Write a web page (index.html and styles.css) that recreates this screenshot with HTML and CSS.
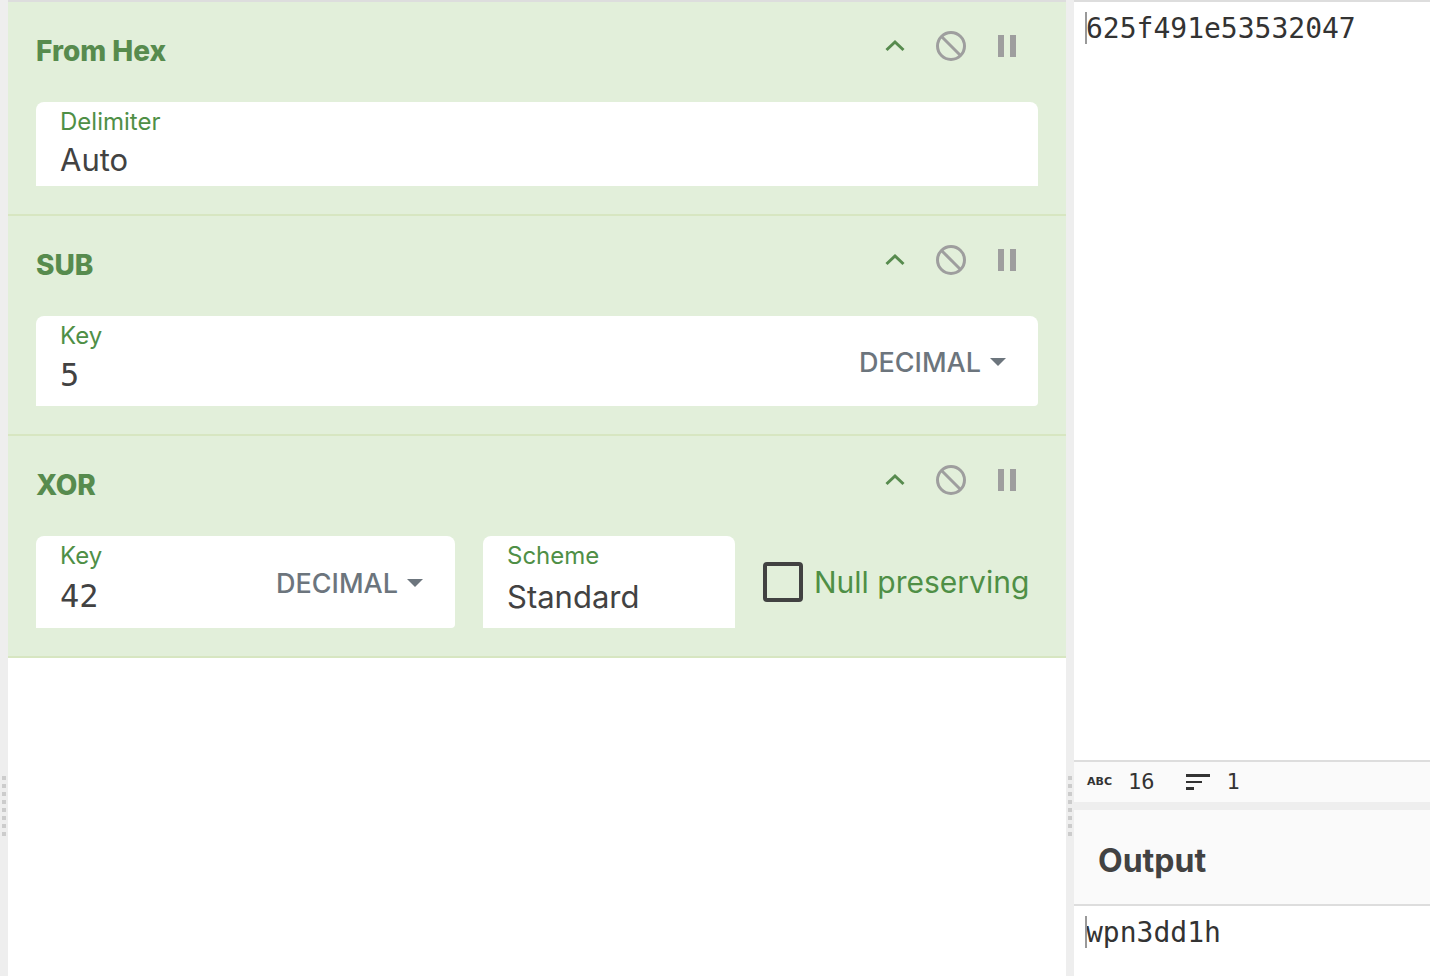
FILE: index.html
```html
<!DOCTYPE html>
<html lang="en">
<head>
<meta charset="utf-8">
<title>Recipe</title>
<link rel="stylesheet" href="styles.css">
</head>
<body>
<svg class="sprite" aria-hidden="true">
  <symbol id="chevron" viewBox="0 0 32 32"><path d="M7.500 20 16 12l8.500 8" fill="none" stroke="#578b4e" stroke-width="3"/></symbol>
  <symbol id="disable" viewBox="0 0 32 32"><g fill="none" stroke="#9e9e9e" stroke-width="3"><circle cx="16" cy="16" r="13.500"/><path d="M6.500 6.500l19 19"/></g></symbol>
  <symbol id="pause" viewBox="0 0 32 32"><path d="M7 5h6v22H7zM19 5h6v22h-6z" fill="#9e9e9e"/></symbol>
</svg>
<div class="workspace">
  <div class="gutter"><span class="grip"></span></div>
  <main class="recipe">
    <section class="operation">
      <header class="op-header">
        <h2 class="op-title">From Hex</h2>
        <div class="op-actions">
          <button class="icon-button" aria-label="Collapse"><svg class="icon"><use href="#chevron"/></svg></button>
          <button class="icon-button" aria-label="Disable"><svg class="icon"><use href="#disable"/></svg></button>
          <button class="icon-button" aria-label="Set breakpoint"><svg class="icon"><use href="#pause"/></svg></button>
        </div>
      </header>
      <div class="field compact">
        <label class="field-label" for="delimiter">Delimiter</label>
        <select class="field-value" id="delimiter"><option>Auto</option></select>
      </div>
    </section>
    <section class="operation">
      <header class="op-header">
        <h2 class="op-title">SUB</h2>
        <div class="op-actions">
          <button class="icon-button" aria-label="Collapse"><svg class="icon"><use href="#chevron"/></svg></button>
          <button class="icon-button" aria-label="Disable"><svg class="icon"><use href="#disable"/></svg></button>
          <button class="icon-button" aria-label="Set breakpoint"><svg class="icon"><use href="#pause"/></svg></button>
        </div>
      </header>
      <div class="field with-toggle medium">
        <div class="field-main">
          <label class="field-label" for="sub-key">Key</label>
          <input class="field-value mono" id="sub-key" type="text" value="5">
        </div>
        <button class="toggle" aria-haspopup="true">DECIMAL<span class="caret"></span></button>
      </div>
    </section>
    <section class="operation">
      <header class="op-header">
        <h2 class="op-title">XOR</h2>
        <div class="op-actions">
          <button class="icon-button" aria-label="Collapse"><svg class="icon"><use href="#chevron"/></svg></button>
          <button class="icon-button" aria-label="Disable"><svg class="icon"><use href="#disable"/></svg></button>
          <button class="icon-button" aria-label="Set breakpoint"><svg class="icon"><use href="#pause"/></svg></button>
        </div>
      </header>
      <div class="field-row">
        <div class="field with-toggle">
          <div class="field-main">
            <label class="field-label" for="xor-key">Key</label>
            <input class="field-value mono" id="xor-key" type="text" value="42">
          </div>
          <button class="toggle" aria-haspopup="true">DECIMAL<span class="caret"></span></button>
        </div>
        <div class="field">
          <label class="field-label" for="scheme">Scheme</label>
          <select class="field-value" id="scheme"><option>Standard</option></select>
        </div>
        <label class="check"><input class="check-box" type="checkbox">Null preserving</label>
      </div>
    </section>
  </main>
  <div class="gutter"><span class="grip"></span></div>
  <div class="io">
    <section class="pane">
      <div class="editor">
        <textarea class="text" aria-label="Input" spellcheck="false">625f491e53532047</textarea>
        <span class="cursor"></span>
      </div>
      <footer class="status">
        <span class="status-item"><span class="abc">ABC</span>16</span>
        <span class="status-item"><svg class="lines" viewBox="0 0 24 16" aria-label="Lines"><path d="M0 0h24v3H0zM0 7h16v2H0zM0 13h8v3H0z" fill="#333"/></svg>1</span>
      </footer>
    </section>
    <div class="divider"></div>
    <section class="pane">
      <header class="output-header"><h2 class="output-title">Output</h2></header>
      <div class="editor">
        <textarea class="text" aria-label="Output" spellcheck="false" readonly>wpn3dd1h</textarea>
        <span class="cursor"></span>
      </div>
    </section>
  </div>
</div>
</body>
</html>
```
FILE: styles.css
```css
* { box-sizing: border-box; }
body {
  margin: 0;
  background: #fff;
  color: #424242;
  font-family: Inter, "Liberation Sans", sans-serif;
}
button, input, select, textarea {
  margin: 0;
  padding: 0;
  border: 0;
  background: none;
  color: inherit;
  font: inherit;
  outline: none;
}
.sprite { display: none; }
.workspace {
  display: grid;
  grid-template-columns: 8px minmax(0, 1058fr) 8px minmax(0, 356fr);
  height: 100vh;
}
.gutter {
  display: flex;
  flex-direction: column;
  justify-content: flex-end;
  align-items: center;
  padding-bottom: 140px;
  background: #eee;
}
.grip {
  width: 4px;
  height: 60px;
  background: repeating-linear-gradient(#ccc 0 4px, transparent 4px 8px);
}
.recipe { border-top: 2px solid #ddd; }
.operation {
  padding: 28px;
  border-bottom: 2px solid #d7e6c1;
  background: #e2efda;
}
.op-header {
  display: flex;
  justify-content: space-between;
  align-items: flex-start;
  margin-bottom: 30px;
  padding-right: 15px;
}
.op-title {
  margin: 0;
  color: #578b4e;
  font-size: 28px;
  font-weight: 800;
  line-height: 42px;
}
.op-actions { display: flex; gap: 24px; }
.icon-button { width: 32px; height: 32px; cursor: pointer; }
.icon { display: block; width: 32px; height: 32px; }
.field {
  padding: 4px 24px 8px;
  border-radius: 8px 8px 0 0;
  background: #fff;
}
.field-label {
  display: block;
  color: #4f8f46;
  font-size: 24px;
  line-height: 32px;
}
.field-value {
  display: block;
  width: 100%;
  height: 48px;
  appearance: none;
  font-size: 31px;
}
.mono {
  font-family: "DejaVu Sans Mono", monospace;
  font-size: 32px;
}
.compact { padding-bottom: 6px; }
.compact .field-value { height: 42px; }
.medium .field-value { height: 46px; }
.with-toggle {
  display: flex;
  align-items: center;
  padding-right: 32px;
  border-radius: 8px 8px 4px 0;
}
.field-main { flex: 1; min-width: 0; }
.toggle {
  display: flex;
  align-items: center;
  gap: 9px;
  padding-top: 6px;
  color: #6c757d;
  font-size: 27px;
  font-weight: 500;
  cursor: pointer;
}
.caret {
  border: 8px solid transparent;
  border-top-color: #6c757d;
  border-bottom: 0;
}
.field-row {
  display: grid;
  grid-template-columns: minmax(0, 419fr) minmax(0, 252fr) minmax(0, 275fr);
  gap: 28px;
}
.check {
  display: flex;
  align-items: center;
  gap: 11px;
  color: #4f8f46;
  font-size: 30px;
  white-space: nowrap;
}
.check-box {
  flex: none;
  width: 40px;
  height: 40px;
  appearance: none;
  border: 4px solid #424242;
  border-radius: 4px;
}
.io {
  display: grid;
  grid-template-rows: minmax(0, 802fr) 8px minmax(0, 166fr);
  min-height: 0;
}
.pane { display: flex; flex-direction: column; }
.pane:first-child { border-top: 2px solid #ddd; }
.editor {
  position: relative;
  flex: 1;
  min-height: 0;
}
.text {
  display: block;
  width: 100%;
  height: 100%;
  padding: 11px 12px;
  overflow: hidden;
  resize: none;
  color: #333;
  font-family: "DejaVu Sans Mono", monospace;
  font-size: 28px;
  line-height: 32px;
}
.cursor {
  position: absolute;
  top: 10px;
  left: 11px;
  width: 2px;
  height: 32px;
  background: #999;
}
.status {
  display: flex;
  gap: 32px;
  padding: 0 13px;
  border-top: 2px solid #ddd;
  background: #fafafa;
  color: #333;
  font-family: "DejaVu Sans Mono", monospace;
  font-size: 22px;
  line-height: 40px;
}
.status-item { display: flex; align-items: center; gap: 16px; }
.abc {
  font-family: "DejaVu Sans", sans-serif;
  font-size: 11px;
  font-weight: 700;
}
.lines { width: 24px; height: 16px; }
.divider { background: #eee; }
.output-header {
  padding: 31px 24px 23px;
  border-bottom: 2px solid #ddd;
  background: #fafafa;
}
.output-title {
  margin: 0;
  font-size: 32px;
  font-weight: 700;
  line-height: 40px;
}
```
